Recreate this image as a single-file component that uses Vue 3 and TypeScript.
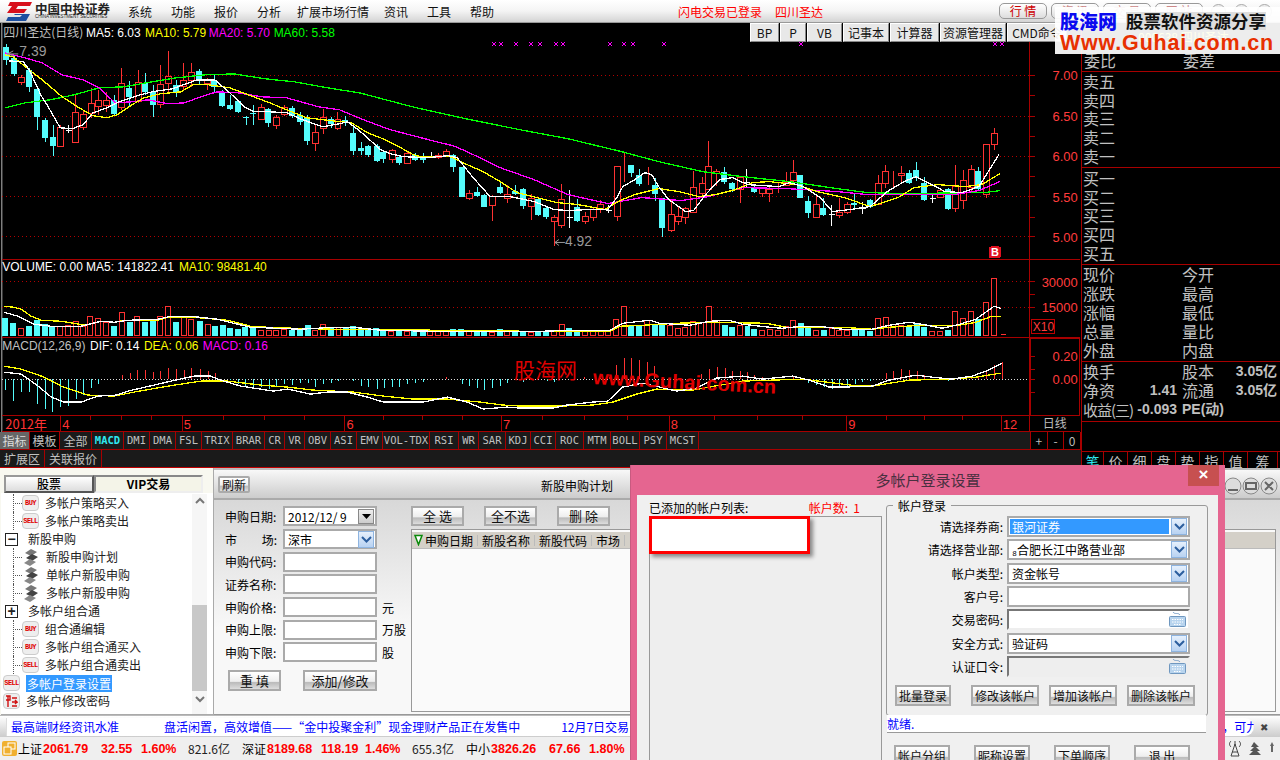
<script setup lang="ts">
type Candle = { x: number; k: string; t: number; b: number; h: number; l: number };
type Bar = { x: number; k: string; t: number };

const candleSrc = `5 c 47 60 44 65|13 c 58 74 55 76|20 r 77 82 75 85|28 c 70 87 68 92|36 c 89 117 87 130|44 c 120 138 118 142|52 c 137 146 125 156|59 r 127 146 125 147|67 w 130 130 125 133|74 r 112 142 95 143|82 r 114 127 110 130|90 r 103 113 88 118|97 r 100 106 90 115|105 r 100 105 92 112|113 c 100 114 95 115|120 r 83 107 68 110|128 c 88 97 81 107|137 r 82 101 70 103|144 c 83 92 73 95|152 c 92 105 85 117|159 r 84 104 65 108|167 r 76 83 51 92|175 c 85 93 80 97|182 r 80 86 63 90|190 r 72 80 63 87|198 c 71 79 69 84|206 r 80 83 78 90|213 c 80 87 75 93|221 c 93 106 90 107|229 c 105 109 95 110|237 c 101 112 100 113|245 c 117 118 116 125|252 c 113 114 105 125|260 r 107 119 104 120|267 c 109 123 108 127|275 r 117 125 115 129|283 r 107 114 105 116|291 c 108 116 106 118|299 c 115 122 112 125|306 c 117 141 115 145|314 r 132 143 125 151|322 r 117 128 109 134|330 c 119 124 117 128|337 r 119 128 112 130|345 c 120 123 116 126|353 c 133 151 125 155|361 c 148 151 142 155|368 c 146 155 145 157|377 c 146 161 144 162|383 c 152 159 150 163|392 r 150 159 149 163|399 c 157 163 155 165|407 r 153 163 152 164|415 c 155 160 153 161|423 c 156 160 153 163|431 w 156 156 152 158|438 r 155 157 153 159|446 r 151 156 149 157|453 c 155 167 154 172|462 c 167 197 167 197|469 r 193 198 190 200|477 c 192 196 187 197|484 c 195 207 194 207|492 r 196 205 195 221|500 c 187 193 183 194|507 r 194 198 185 203|515 c 191 194 185 195|523 c 189 206 188 209|531 r 198 206 194 220|538 c 199 215 198 216|546 c 208 217 207 219|554 r 217 221 215 247|561 r 199 225 184 228|569 w 217 217 190 228|577 c 207 221 199 222|585 r 216 221 212 224|593 r 209 217 208 221|600 r 204 209 200 213|608 w 210 210 205 213|617 r 166 216 166 221|624 r 160 160 153 182|631 c 165 173 165 177|639 c 175 184 169 186|648 r 180 180 167 185|655 c 185 194 178 201|662 c 198 229 198 238|671 r 214 231 199 233|678 r 216 221 207 225|685 r 208 217 207 224|693 r 187 212 171 213|702 r 183 193 177 198|708 r 166 189 141 190|716 r 171 173 169 186|724 c 172 182 167 184|732 c 183 189 182 192|740 r 177 189 176 203|747 w 182 182 169 187|755 c 188 192 186 193|763 r 188 193 187 197|770 r 189 193 187 202|779 r 187 187 183 193|787 r 182 185 172 186|794 r 172 180 160 183|801 c 175 198 175 198|809 c 201 213 196 218|817 r 204 217 196 218|824 c 208 215 198 216|832 w 214 214 205 226|840 r 212 215 198 218|848 r 204 212 202 214|855 c 203 205 193 208|863 w 208 208 202 214|871 c 200 207 199 208|879 r 183 204 175 205|886 r 171 183 165 188|894 r 179 179 171 188|902 r 173 175 166 182|910 c 173 183 170 184|917 c 170 177 162 181|925 c 183 200 177 201|933 w 198 198 195 203|941 r 190 197 188 198|949 c 189 209 188 210|956 r 186 208 165 212|964 r 180 200 170 209|972 r 169 187 165 192|979 c 171 189 167 190|987 r 144 194 144 198|995 r 133 144 128 150`;
const candles: Candle[] = candleSrc.split('|').map((s) => {
  const p = s.split(' ');
  return { x: +p[0], k: p[1], t: +p[2], b: +p[3], h: +p[4], l: +p[5] };
});

const ma5 = '8,61 22,62 28,70 40,96 47,107 59,128 71,129 82,125 92,113 106,108 118,102 139,95 151,92 171,89 188,83 196,80 214,80 229,93 245,108 253,112 269,112 286,113 302,120 322,127 339,124 347,122 359,131 367,138 380,150 390,154 403,157 427,158 448,156 457,158 473,178 490,197 510,197 534,202 554,210 568,211 588,210 608,210 617,198 623,187 635,180 645,173 652,175 659,187 669,200 686,212 694,211 706,195 720,180 733,178 748,185 763,186 780,187 790,183 804,187 821,198 833,212 851,210 871,207 888,192 905,182 917,177 929,183 946,192 963,193 980,187 1000,155';
const ma10 = '4,55 12,57 28,70 41,80 61,97 78,108 92,116 106,118 116,115 131,105 143,98 159,94 180,92 192,85 208,85 229,88 253,97 269,103 286,110 306,118 331,121 351,123 367,133 380,138 393,144 413,155 420,157 450,157 467,165 483,172 500,182 517,193 537,198 557,203 578,205 605,210 618,202 635,195 659,189 679,192 699,197 716,195 736,190 753,183 770,182 797,185 818,192 845,198 871,207 899,198 915,188 939,185 966,187 983,185 1001,174';
const ma20 = '4,53 24,58 41,63 61,75 82,80 98,88 114,103 131,102 147,100 167,104 184,103 200,97 216,92 237,93 261,97 286,98 318,107 339,110 363,120 390,130 413,136 440,143 453,146 467,152 500,168 534,180 568,195 608,204 642,198 682,201 709,197 743,188 787,189 838,192 868,195 905,195 956,195 980,191 1001,182';
const ma60 = '4,108 24,103 49,100 73,95 98,88 122,87 151,82 175,78 204,75 233,74 265,79 294,82 327,88 359,93 412,107 461,118 520,130 568,139 622,152 659,162 703,172 743,177 790,182 838,189 868,193 905,194 986,193 1001,191';

const grid = [75, 116, 156, 196, 237];
const volGrid = [282, 308];
const marks = [494, 501, 516, 531, 540, 556, 563, 610, 624, 633, 664, 802, 996, 1003];
const ticks = [59, 89, 120, 150, 181, 222, 263, 303, 344, 383, 422, 462, 501, 542, 584, 627, 669, 714, 758, 803, 847, 887, 925, 963, 1002];

function bars(src: string, off: number): Bar[] {
  return src.split(' ').map((s) => {
    const m = s.match(/(\d+)([cr])(\d+)/) as RegExpMatchArray;
    return { x: Math.round((+m[1] + off) / 3), k: m[2], t: +m[3] };
  });
}
const vol = [
  ...bars('13c177 37c192 61r208 85c201 107c183 131c195 154c200 178r200 201r197 224r187 247r202 268r172 292r176 316r190 340c202 362r160 386c188 409r172 433c188 456c185 478r172 502r140 526c190 548r172 571r180 596c186 620r196 642c202 665c197 688c207 710c210 733c205 757c208 780r212 803r212 826r212 850r210 873c212 896c212 920c198 943r212 967r196 990c205 1013r204 1037c205 1060c202 1083c208 1105c210 1127c208 1150c216 1174r215 1197c210 1220r215 1243c215 1268c216 1291r215 1314r216 1337r215 1360c210 1384c210 1408r216 1430c212 1453c217 1477r218 1500c211 1522r216', 0),
  ...bars('16c216 40c218 62r218 85c218 109c218 133r212 155r196 178c208 202c214 226r217 248r217 272r212 295r216 319r181 341r142 364c197 388c200 412r183 434c196 457c195 481r198 503r208 526r203 550r187 574r190 596r142 620r183 644c198 667c204 690r198 713c200 736c210 760r213 783r211 806r213 830r200 853r184 875c192 898c207 922r214 945c213 968r207 990r214 1015r214 1037c206 1060c212 1084c215 1108r178 1130r175 1153r196 1177r198 1200c204 1224c192 1246c204 1270r216 1294r216 1316c212 1339r157 1362r177 1385r157 1408c180 1432r130 1456r58', 1530),
].map((b) => ({ x: b.x, k: b.k, y: 260 + Math.round(b.t / 3) }));

const macd = [
  ...bars('13c392 37c425 61c400 85c400 107c435 131c450 154c460 178c445 201c442 224c420 247c408 269c388 292c375 362r347 386r342 409r332 433r333 456r338 478r337 502r327 526r330 548r332 571r327 596r330 620r336 642r342 688c363 710c375 733c382 757c388 780c385 803c390 826c382 850c375 873c378 896c372 920c372 943c385 967c375 990c372 1013c365 1060c365 1083c380 1105c385 1130c390 1152c388 1175c385 1198c383 1222c375 1244c372 1268c368 1337r354 1385c375 1408c380 1430c388 1453c392 1477c388 1500c380 1522c372', 0),
  ...bars('40c368 110c365 133c370 222r355 270r358 296r355 319r318 341r298 364r297 388r302 412r308 433r320 572r345 596r330 620r324 644r328 667r335 690r335 713r338 736r348 760r353 853r350 898c372 922c378 945c385 968c390 990c388 1015c380 1037c375 1060c370 1084c367 1130r342 1153r335 1177r330 1200r333 1224r336 1246r348 1316c367 1385r350 1408r352 1432r335 1456r318 1478r310', 1530),
].map((b) => ({ x: b.x, k: b.k, y: 260 + Math.round(b.t / 3) }));

function zline(a: string, b: string): string {
  const conv = (s: string, off: number) =>
    s.split(' ').map((p) => {
      const [x, y] = p.split(',').map(Number);
      return `${Math.round((x + off) / 3)},${260 + Math.round(y / 3)}`;
    });
  return [...conv(a, 0), ...conv(b, 1530)].join(' ');
}
const volY = zline('10,140 40,143 60,150 90,170 120,183 180,185 220,192 250,197 300,187 340,190 370,184 470,182 500,175 580,175 680,182 750,200 800,205 880,208 1000,210 1200,210 1300,214 1520,214', '30,215 150,217 300,215 330,200 400,198 500,193 600,190 770,193 830,205 1000,205 1090,210 1140,205 1240,198 1350,198 1400,190 1450,172 1475,172');
const volW = zline('10,160 50,170 100,195 150,200 240,200 300,185 340,190 380,182 470,180 510,172 570,170 650,180 700,193 750,205 900,210 1000,203 1060,205 1140,212 1300,216 1520,216', '30,216 100,217 180,212 300,212 340,192 420,182 450,192 540,198 600,185 660,182 700,195 780,205 820,208 880,200 930,200 1000,210 1090,210 1140,198 1200,190 1240,195 1300,208 1340,198 1400,180 1456,140 1475,148');
const macdY = zline('10,320 60,330 130,355 180,380 260,408 340,410 400,400 500,380 600,365 680,365 780,378 860,385 940,393 1060,398 1150,410 1240,420 1340,420 1440,430 1510,438', '30,441 70,442 150,442 250,438 310,428 380,405 440,390 550,392 700,365 880,360 950,368 1050,380 1090,380 1200,362 1330,360 1400,355 1475,342');
const macdW = zline('10,338 60,345 110,380 150,415 190,430 240,428 290,410 345,408 380,395 460,378 510,365 580,352 630,352 660,362 720,380 820,395 860,390 930,405 980,400 1040,400 1100,415 1150,428 1270,428 1340,415 1400,430 1450,450 1520,445', '30,446 130,448 170,438 250,430 295,425 340,385 400,373 450,385 500,395 560,388 620,358 700,352 760,360 850,352 900,362 960,385 1000,385 1090,382 1140,362 1220,347 1270,355 1330,360 1390,350 1430,335 1478,312');

const menu = [
  { t: '系统' }, { t: '功能' }, { t: '报价' }, { t: '分析' },
  { t: '扩展市场行情', wide: true }, { t: '资讯' }, { t: '工具' }, { t: '帮助' },
];
const floatBtns = [
  { t: 'BP', w: 29 }, { t: 'P', w: 26 }, { t: 'VB', w: 35 }, { t: '记事本', w: 46 },
  { t: '计算器', w: 49 }, { t: '资源管理器', w: 66 }, { t: 'CMD命令', w: 60 },
];
const cnTabs = [
  { t: '指标', w: 30, cls: 'sel' }, { t: '模板', w: 30, cls: 'blk' }, { t: '全部', w: 32, cls: '' },
];
const idxTabs = [
  { t: 'MACD', w: 32, cls: 'cy' }, { t: 'DMI', w: 26 }, { t: 'DMA', w: 26 }, { t: 'FSL', w: 26 },
  { t: 'TRIX', w: 31 }, { t: 'BRAR', w: 32 }, { t: 'CR', w: 20 }, { t: 'VR', w: 20 }, { t: 'OBV', w: 26 },
  { t: 'ASI', w: 26 }, { t: 'EMV', w: 26 }, { t: 'VOL-TDX', w: 47 }, { t: 'RSI', w: 29 }, { t: 'WR', w: 20 },
  { t: 'SAR', w: 27 }, { t: 'KDJ', w: 25 }, { t: 'CCI', w: 25 }, { t: 'ROC', w: 28 }, { t: 'MTM', w: 27 },
  { t: 'BOLL', w: 29 }, { t: 'PSY', w: 27 }, { t: 'MCST', w: 32 },
];
const sells = ['卖五', '卖四', '卖三', '卖二', '卖一'];
const buys = ['买一', '买二', '买三', '买四', '买五'];
const quote = [['现价', '今开'], ['涨跌', '最高'], ['涨幅', '最低'], ['总量', '量比'], ['外盘', '内盘']];
const sideTabs = [
  { t: '笔', w: 22 }, { t: '价', w: 24 }, { t: '细', w: 24 }, { t: '盘', w: 24 },
  { t: '势', w: 24 }, { t: '指', w: 24 }, { t: '值', w: 24 }, { t: '筹', w: 30 },
];
const tree = [
  { t: '多帐户策略买入', child: true, ic: 'buy' },
  { t: '多帐户策略卖出', child: true, ic: 'sell' },
  { t: '新股申购', exp: '−' },
  { t: '新股申购计划', child: true, ic: 'stack' },
  { t: '单帐户新股申购', child: true, ic: 'stack' },
  { t: '多帐户新股申购', child: true, ic: 'stack' },
  { t: '多帐户组合通', exp: '+' },
  { t: '组合通编辑', child: true, ic: 'buy' },
  { t: '多帐户组合通买入', child: true, ic: 'buy' },
  { t: '多帐户组合通卖出', child: true, ic: 'sell' },
  { t: '多帐户登录设置', top: true, ic: 'sell', sel: true },
  { t: '多帐户修改密码', top: true, ic: 'pw' },
];
const formRows = [
  { l: '申购代码', u: '' }, { l: '证券名称', u: '' }, { l: '申购价格', u: '元' },
  { l: '申购上限', u: '万股' }, { l: '申购下限', u: '股' },
];
const cols = ['申购日期', '新股名称', '新股代码', '市场'];
const acctRows = [
  { l: '请选择券商', v: '银河证券', k: 'sel', hi: true },
  { l: '请选择营业部', v: '₈合肥长江中路营业部', k: 'sel' },
  { l: '帐户类型', v: '资金帐号', k: 'sel' },
  { l: '客户号', v: '', k: 'in' },
  { l: '交易密码', v: '', k: 'kb' },
  { l: '安全方式', v: '验证码', k: 'sel' },
  { l: '认证口令', v: '', k: 'kbd' },
];
</script>

<template>
  <div class="page">
    <header class="top">
      <div class="brand">
        <svg class="mark" width="28" height="19" viewBox="0 0 28 19">
          <polygon points="5,0 27,0 25,4 13,4 11,7 22,7 19,11 2,11 7,4 3,4" fill="#d8101c" />
          <polygon points="10,12 25,12 21,19 1,19 3,15 15,15 17,13 9,13" fill="#1c4fa0" />
        </svg>
        <div class="brandtxt">
          <b>中国中投证券</b>
          <i>CHINA INVESTMENT SECURITIES</i>
        </div>
      </div>
      <nav class="menu">
        <span v-for="m in menu" :key="m.t" :class="{ wide: m.wide }">{{ m.t }}</span>
      </nav>
      <div class="login"><span>闪电交易已登录</span><span>四川圣达</span></div>
      <div class="topbtns">
        <span class="tbtn">行 情</span><span class="tbtn faded">资 讯</span>
        <span class="tbtn faded">交 易</span><span class="tbtn faded">网 站</span>
        <span class="circ"></span><span class="circ"></span><span class="circ"></span>
      </div>
    </header>

    <section class="market">
      <div class="chartcol">
        <svg class="chart" width="1081" height="410" viewBox="0 23 1081 410">
          <rect x="0" y="23" width="1081" height="410" fill="#000" />
          <line x1="0.5" y1="23" x2="0.5" y2="433" stroke="#bbb" />
          <g shape-rendering="crispEdges">
            <line v-for="g in grid" :key="'g' + g" x1="1" :y1="g + 0.5" x2="1030" :y2="g + 0.5" class="dot" />
            <line v-for="g in volGrid" :key="'v' + g" x1="1" :y1="g + 0.5" x2="1030" :y2="g + 0.5" class="dot" />
            <line x1="1" y1="380.5" x2="1030" y2="380.5" class="zero" />
            <g v-for="c in candles" :key="'c' + c.x">
              <template v-if="c.k === 'w'">
                <line :x1="c.x + 0.5" :y1="c.h" :x2="c.x + 0.5" :y2="c.l" stroke="#fff" />
                <line :x1="c.x - 2" :y1="c.t + 0.5" :x2="c.x + 4" :y2="c.t + 0.5" stroke="#fff" />
              </template>
              <template v-else-if="c.k === 'r'">
                <line :x1="c.x + 0.5" :y1="c.h" :x2="c.x + 0.5" :y2="c.t" class="up" />
                <line :x1="c.x + 0.5" :y1="c.b" :x2="c.x + 0.5" :y2="c.l" class="up" />
                <rect :x="c.x - 2.5" :y="c.t + 0.5" width="6" :height="Math.max(c.b - c.t, 0)" class="upbody" />
              </template>
              <template v-else>
                <line :x1="c.x + 0.5" :y1="c.h" :x2="c.x + 0.5" :y2="c.l" class="dn" />
                <rect :x="c.x - 3" :y="c.t" width="6" :height="Math.max(c.b - c.t, 1)" class="dnbody" />
              </template>
            </g>
            <polyline :points="ma60" class="ln green" />
            <polyline :points="ma20" class="ln mag" />
            <polyline :points="ma10" class="ln yel" />
            <polyline :points="ma5" class="ln wht" />
            <g v-for="(b, i) in vol" :key="'b' + i">
              <rect v-if="b.k === 'r'" :x="b.x - 2.5" :y="b.y + 0.5" width="5" :height="336 - b.y" class="upbody" />
              <rect v-else :x="b.x - 3" :y="b.y" width="6" :height="337 - b.y" class="dnbody" />
            </g>
            <rect x="1002" y="335" width="5" height="1" fill="#ff3232" />
            <polyline :points="volY" class="ln yel" />
            <polyline :points="volW" class="ln wht" />
            <line v-for="(b, i) in macd" :key="'m' + i" :x1="b.x + 0.5" y1="380" :x2="b.x + 0.5" :y2="b.y" :class="b.k === 'r' ? 'up' : 'dn'" />
            <polyline :points="macdY" class="ln yel" />
            <polyline :points="macdW" class="ln wht" />
            <g v-for="m in marks" :key="'x' + m" class="cross">
              <line :x1="m - 2" y1="42" :x2="m + 2" y2="46" />
              <line :x1="m + 2" y1="42" :x2="m - 2" y2="46" />
            </g>
            <g class="rule">
              <line x1="1" y1="260.5" x2="1081" y2="260.5" />
              <line x1="1" y1="338.5" x2="1081" y2="338.5" />
              <line x1="1" y1="416.5" x2="1081" y2="416.5" />
              <line x1="1030.5" y1="23" x2="1030.5" y2="433" />
              <line x1="1031" y1="339.5" x2="1081" y2="339.5" />
              <line x1="1080.5" y1="339" x2="1080.5" y2="417" />
              <line x1="1031.5" y1="339" x2="1031.5" y2="417" />
              <line x1="1" y1="432.5" x2="1081" y2="432.5" />
              <line v-for="t in ticks" :key="'t' + t" :x1="t + 0.5" y1="417" :x2="t + 0.5" y2="421" />
              <line x1="59.5" y1="417" x2="59.5" y2="432" />
              <line x1="181.5" y1="417" x2="181.5" y2="432" />
              <line x1="344.5" y1="417" x2="344.5" y2="432" />
              <line x1="501.5" y1="417" x2="501.5" y2="432" />
              <line x1="669.5" y1="417" x2="669.5" y2="432" />
              <line x1="847.5" y1="417" x2="847.5" y2="432" />
              <line x1="1002.5" y1="417" x2="1002.5" y2="432" />
              <line v-for="y in [75, 95, 116, 136, 156, 176, 196, 217, 237, 282, 295, 308, 357, 370, 380, 393]" :key="'a' + y" x1="1031" :y1="y + 0.5" x2="1036" :y2="y + 0.5" />
              <rect x="1032.5" y="320.5" width="23" height="14" fill="none" />
            </g>
            <rect x="990" y="247" width="12" height="12" rx="2" fill="#e01020" />
          </g>
          <text x="996" y="257" class="bb">B</text>
          <g class="lbl">
            <text x="2" y="37"><tspan class="gry cn">四川圣达(日线)</tspan></text>
            <text x="85" y="37" class="wt">MA5: 6.03</text>
            <text x="144" y="37" class="yl">MA10: 5.79</text>
            <text x="208" y="37" class="mg">MA20: 5.70</text>
            <text x="273" y="37" class="gn">MA60: 5.58</text>
            <text x="1" y="272" class="wt">VOLUME: 0.00</text>
            <text x="85" y="272" class="wt">MA5: 141822.41</text>
            <text x="178" y="272" class="yl">MA10: 98481.40</text>
            <text x="1" y="351" class="gry">MACD(12,26,9)</text>
            <text x="89" y="351" class="wt">DIF: 0.14</text>
            <text x="143" y="351" class="yl">DEA: 0.06</text>
            <text x="202" y="351" class="mg">MACD: 0.16</text>
            <text x="18" y="56" class="gry big">7.39</text>
            <text x="565" y="247" class="gry big">4.92</text>
          </g>
          <g class="ax">
            <text x="1079" y="80">7.00</text>
            <text x="1079" y="121">6.50</text>
            <text x="1079" y="161">6.00</text>
            <text x="1079" y="202">5.50</text>
            <text x="1079" y="243">5.00</text>
            <text x="1079" y="288">30000</text>
            <text x="1079" y="313">15000</text>
            <text x="1079" y="362">0.20</text>
            <text x="1079" y="385">0.00</text>
          </g>
          <text x="1034" y="332" class="axs">X10</text>
          <polyline points="12,51 6,54 12,56" class="arrow" />
          <line x1="6" y1="54" x2="17" y2="54" class="arrow" />
          <line x1="555" y1="243" x2="565" y2="243" class="arrow" />
          <polyline points="559,240 555,243 559,246" class="arrow" />
          <g class="date">
            <text x="4" y="430" class="cn">2012年</text>
            <text x="61" y="430">4</text><text x="183" y="430">5</text><text x="346" y="430">6</text>
            <text x="503" y="430">7</text><text x="671" y="430">8</text><text x="849" y="430">9</text>
            <text x="1004" y="430">12</text>
          </g>
          <text x="1044" y="429" class="dayl">日线</text>
          <text x="514" y="379" class="wm1">股海网</text>
          <text x="593" y="385" class="wm2" transform="rotate(3 593 385)">www.Guhai.com.cn</text>
        </svg>
        <div class="tabs">
          <div class="tabgroup">
            <span v-for="t in cnTabs" :key="t.t" class="tab cnT" :class="t.cls" :style="{ width: t.w + 'px' }">{{ t.t }}</span>
            <span v-for="t in idxTabs" :key="t.t" class="tab idx" :class="t.cls" :style="{ width: t.w + 'px' }">{{ t.t }}</span>
          </div>
          <div class="pm"><span>+</span><span>-</span><span>0</span></div>
        </div>
        <div class="ext"><span class="exta">扩展区</span><span class="extb">关联报价</span></div>
      </div>

      <aside class="side">
        <div class="sec head">
          <div class="code">000638 四川圣达</div>
          <div class="r2"><span>委比</span><span>委差</span></div>
        </div>
        <div class="sec five five-s"><div v-for="s in sells" :key="s">{{ s }}</div></div>
        <div class="sec five five-b"><div v-for="s in buys" :key="s">{{ s }}</div></div>
        <div class="sec qt">
          <div v-for="q in quote" :key="q[0]" class="r2"><span>{{ q[0] }}</span><span>{{ q[1] }}</span></div>
        </div>
        <div class="sec fin">
          <div class="fr"><span>换手</span><b></b><span class="c3">股本</span><b>3.05亿</b></div>
          <div class="fr"><span>净资</span><b>1.41</b><span class="c3">流通</span><b>3.05亿</b></div>
          <div class="fr"><span class="nb">收益(三)</span><b>-0.093</b><span class="c3 pe">PE(动)</span><b></b></div>
        </div>
        <div class="spacer"></div>
        <div class="sidetabs">
          <span v-for="(t, i) in sideTabs" :key="t.t" :class="{ on: i === 0 }" :style="{ width: t.w + 'px' }">{{ t.t }}</span>
        </div>
      </aside>
    </section>

    <section class="work">
      <div class="nav">
        <div class="navtabs"><span class="nt">股票</span><span class="nt act">VIP交易</span></div>
        <div class="treebox">
          <ul class="tree">
            <li v-for="n in tree" :key="n.t" :class="{ child: n.child, toplevel: n.top, hasexp: n.exp }">
              <span v-if="n.exp" class="exp">{{ n.exp }}</span>
              <span v-if="n.ic === 'buy'" class="ic buy">BUY</span>
              <span v-else-if="n.ic === 'sell'" class="ic sell">SELL</span>
              <svg v-else-if="n.ic === 'stack'" class="stack" width="16" height="17" viewBox="0 0 16 17">
                <polygon points="8,0 14,3 8,7 2,4" fill="#777" />
                <polygon points="9,5 15,8 9,12 3,9" fill="#444" />
                <polygon points="7,10 13,13 7,17 1,14" fill="#888" />
              </svg>
              <span v-else-if="n.ic === 'pw'" class="ic pw">
                <svg width="13" height="13" viewBox="0 0 13 13"><path d="M1 1h4v4H1M3 1v11M7 3h5M7 7h5l-2-2M12 7l-2 2M7 11h5" fill="none" stroke="#d01010" stroke-width="1.4" /></svg>
              </span>
              <span class="tt" :class="{ selt: n.sel }">{{ n.t }}</span>
            </li>
          </ul>
          <div class="sb">
            <svg width="12" height="7" viewBox="0 0 12 7"><path d="M2 6l4-4 4 4" fill="none" stroke="#777" stroke-width="2" /></svg>
            <span class="thumb"></span>
            <svg width="12" height="7" viewBox="0 0 12 7"><path d="M2 1l4 4 4-4" fill="none" stroke="#777" stroke-width="2" /></svg>
          </div>
        </div>
      </div>
      <div class="panel">
        <div class="phead">
          <span class="btn refresh">刷新</span>
          <span class="ptitle">新股申购计划</span>
          <div class="winbtns">
            <svg width="54" height="20" viewBox="0 0 54 20">
              <g fill="#ddd" stroke="#888"><circle cx="9" cy="10" r="8" /><circle cx="27" cy="10" r="8" /><circle cx="45" cy="10" r="8" /></g>
              <path d="M4 14h10M22 7h10v6H22zM41 6l8 8M49 6l-8 8" fill="none" stroke="#666" stroke-width="2" />
            </svg>
          </div>
        </div>
        <div class="pbody">
          <form class="buy-form" @submit.prevent>
            <div class="frow"><label>申购日期:</label>
              <div class="inp datei"><span>2012/12/ 9</span><i class="dd">
                <svg width="9" height="5" viewBox="0 0 9 5"><path d="M0 0h9L4.5 5z" /></svg></i></div></div>
            <div class="frow"><label class="just"><span>市</span><span>场:</span></label>
              <div class="inp datei"><span>深市</span><i class="sarrow"><svg width="11" height="7" viewBox="0 0 11 7"><path d="M1 1l4.500 4.500L10 1" fill="none" stroke="#2c5e9e" stroke-width="2" /></svg></i></div></div>
            <div v-for="r in formRows" :key="r.l" class="frow"><label>{{ r.l }}:</label><div class="inp"></div><em>{{ r.u }}</em></div>
            <div class="fbtns"><span class="btn b1">重 填</span><span class="btn b2">添加/修改</span></div>
          </form>
          <div class="lst">
            <div class="lbtns"><span class="btn b3">全 选</span><span class="btn b3">全不选</span><span class="btn b3">删 除</span></div>
            <div class="ltable">
              <div class="lhead">
                <svg width="9" height="12" viewBox="0 0 9 12"><path d="M1 1.500h7L4.500 10.500z" fill="#fff" stroke="#0a8a0a" stroke-width="1.500" /></svg>
                <span v-for="c in cols" :key="c" class="lc">{{ c }}</span>
              </div>
            </div>
          </div>
        </div>
      </div>
    </section>

    <section class="ticker">
      <div class="pill">
        <span class="tk1">最高端财经资讯水准</span>
        <span class="tk2">盘活闲置，高效增值——“金中投聚金利”现金理财产品正在发售中</span>
        <span class="tk3">12月7日交易</span>
        <span class="tk4">，可九</span>
      </div>
      <span class="tkx">✖</span>
    </section>

    <footer class="status">
      <svg class="sico" width="15" height="15" viewBox="0 0 15 15">
        <rect width="15" height="15" rx="2" fill="#f0b030" />
        <rect x="6" y="2" width="7" height="6" fill="none" stroke="#fff" />
        <rect x="2" y="6" width="7" height="7" fill="#f0b030" stroke="#fff" />
      </svg>
      <span class="nm n1">上证</span><b class="v1">2061.79</b><b class="v2">32.55</b><b class="v3">1.60%</b><span class="amt">821.6亿</span>
      <span class="nm n2">深证</span><b class="v1">8189.68</b><b class="v2b">118.19</b><b class="v3b">1.46%</b><span class="amt">655.3亿</span>
      <span class="nm n2">中小</span><b class="v1">3826.26</b><b class="v2">67.66</b><b class="v3">1.80%</b>
      <svg class="rico" width="54" height="20" viewBox="0 0 54 20">
        <path d="M0 4v12" stroke="#c8a020" stroke-width="2" />
        <path d="M11 5l-4 12h8zM8 13h6M11 2v4M7 2c-2 2-2 4 0 6M15 2c2 2 2 4 0 6" fill="none" stroke="#444" />
        <path d="M30 3l5 5h-3l4 4h-3l4 4H25l4-4h-3l4-4h-3z" fill="#555" />
        <path d="M48 3l2 4h-1v6h-2V7h-1z" fill="#666" />
      </svg>
    </footer>

    <!-- floating toolbar over the chart -->
    <div class="floatbar">
      <span v-for="b in floatBtns" :key="b.t" class="fb" :style="{ width: b.w + 'px' }">{{ b.t }}</span>
    </div>

    <div class="adlogo">
      <div class="adtop"><b class="ad1">股海网</b><b class="ad2">股票软件资源分享</b></div>
      <b class="ad3">Www.Guhai.com.cn</b>
    </div>

    <div class="modal">
      <div class="mtitle">
        <span>多帐户登录设置</span>
        <span class="mclose">×</span>
      </div>
      <div class="mbody">
        <div class="mleft">
          <div class="mhead"><span>已添加的帐户列表:</span><span class="cnt">帐户数: &nbsp;1</span></div>
          <div class="alist"><div class="redbox"></div></div>
        </div>
        <div class="mright">
          <fieldset class="grp">
            <legend>帐户登录</legend>
            <div v-for="r in acctRows" :key="r.l" class="arow">
              <label>{{ r.l }}:</label>
              <div class="actl" :class="r.k">
                <span class="aval" :class="{ hi: r.hi }">{{ r.v }}</span>
                <i v-if="r.k === 'sel'" class="sarrow"><svg width="11" height="7" viewBox="0 0 11 7"><path d="M1 1l4.500 4.500L10 1" fill="none" stroke="#2c5e9e" stroke-width="2" /></svg></i>
                <svg v-if="r.k === 'kb' || r.k === 'kbd'" class="kicon" width="17" height="15" viewBox="0 0 17 15">
                  <path d="M4 0c2 3 5 0 7 3" fill="none" stroke="#7aa0c8" />
                  <rect x="0.500" y="4.500" width="16" height="10" rx="1" fill="#b8d4ee" stroke="#6f97bf" />
                  <path d="M3 7.500h11M3 10h11M5 12.500h7" stroke="#fff" stroke-dasharray="1.500 1" />
                </svg>
              </div>
            </div>
            <div class="abtns">
              <span class="btn m1">批量登录</span><span class="btn m2">修改该帐户</span><span class="btn m2">增加该帐户</span><span class="btn m2">删除该帐户</span>
            </div>
          </fieldset>
          <div class="ready">就绪.</div>
          <div class="mfoot">
            <span class="btn m1">帐户分组</span><span class="btn m1">昵称设置</span><span class="btn m1">下单顺序</span><span class="btn m1">退 出</span>
          </div>
        </div>
      </div>
    </div>
  </div>
</template>

<style>
html, body { margin: 0; padding: 0; overflow: hidden; background: #000; }
</style>

<style scoped>
.page {
  position: relative;
  width: 1280px;
  height: 760px;
  overflow: hidden;
  display: flex;
  flex-direction: column;
  font-family: "Noto Sans CJK SC", "Liberation Sans", sans-serif;
  font-size: 12px;
  color: #000;
  background: #f0f0f0;
}
/* top bar */
.top {
  height: 23px;
  box-sizing: border-box;
  display: flex;
  align-items: center;
  background: linear-gradient(#fff, #f4f4f4 50%, #d4d4d4);
  border-bottom: 1px solid #999;
  flex: none;
}
.brand { width: 128px; flex: none; display: flex; align-items: center; padding-left: 5px; box-sizing: border-box; }
.mark { flex: none; }
.brandtxt { display: flex; flex-direction: column; margin-left: 2px; line-height: 1; color: #222; }
.brandtxt b { font-size: 12.500px; line-height: 13px; }
.brandtxt i { font-style: normal; font-size: 4.500px; font-family: "Liberation Sans", sans-serif; white-space: nowrap; }
.menu { display: flex; gap: 19px; width: 550px; flex: none; color: #111; }
.menu .wide { margin: 0 -4px 0 -3px; }
.login { display: flex; gap: 13px; color: #f00; flex: none; }
.topbtns { margin-left: 176px; display: flex; gap: 4px; align-items: center; flex: none; }
.tbtn {
  width: 48px; height: 16px; box-sizing: border-box; border: 1px solid #999; border-radius: 5px;
  background: linear-gradient(#fff, #ddd); color: #c00; font-size: 12px; line-height: 14px; text-align: center;
}
.tbtn.faded { color: #c88; }
.circ { width: 15px; height: 15px; border: 1px solid #aaa; border-radius: 50%; background: #eee; box-sizing: border-box; margin-left: 4px; }

/* market */
.market { display: flex; height: 445px; flex: none; background: #000; }
.chartcol { width: 1081px; flex: none; display: flex; flex-direction: column; }
.chart { display: block; font-family: "Liberation Sans", sans-serif; }
.dot { stroke: #b40000; stroke-dasharray: 1 3; }
.zero { stroke: #ddd; stroke-dasharray: 1 2; }
.up { stroke: #ff3232; }
.dn { stroke: #54fcfc; }
.upbody { fill: #000; stroke: #ff3232; }
.dnbody { fill: #54fcfc; }
.ln { fill: none; stroke-width: 1.3; }
.green { stroke: #00ff00; }
.mag { stroke: #ff00ff; }
.yel { stroke: #ffff00; }
.wht { stroke: #fff; }
.cross line { stroke: #ff00ff; }
.rule line, .rule rect { stroke: #a80000; }
.rule rect { stroke: #c00000; }
.bb { fill: #fff; font-size: 11px; font-weight: bold; text-anchor: middle; }
.lbl text { font-size: 12px; }
.lbl .cn { font-family: "Noto Sans CJK SC", sans-serif; font-size: 12px; }
.gry { fill: #c0c0c0; }
.wt { fill: #fff; }
.yl { fill: #ff0; }
.mg { fill: #f0f; }
.gn { fill: #0f0; }
.big { font-size: 14px !important; fill: #999; }
.ax text { fill: #ff3c3c; font-size: 13px; text-anchor: end; }
.axs { fill: #ff3c3c; font-size: 12px; }
.arrow { fill: none; stroke: #999; }
.date text { fill: #ff3232; font-size: 13px; }
.date .cn { font-family: "Noto Sans CJK SC", sans-serif; }
.dayl { fill: #bbb; font-size: 12px; font-family: "Noto Sans CJK SC", sans-serif; }
.wm1 { fill: #e00000; font-size: 21px; font-family: "Noto Sans CJK SC", sans-serif; }
.wm2 { fill: #e00000; font-size: 20px; font-weight: bold; }

.tabs { height: 17px; display: flex; background: #1a1a1a; border-bottom: 1px solid #a80000; flex: none; }
.tabgroup { display: flex; width: 1030px; flex: none; }
.tab { box-sizing: border-box; border-right: 1px solid #a80000; height: 17px; line-height: 17px; text-align: center; color: #c0c0c0; flex: none; white-space: nowrap; }
.cnT { font-size: 12px; }
.tab.sel { background: #666; color: #ddd; }
.tab.blk { background: #000; }
.idx { font-family: "DejaVu Sans Mono", monospace; font-size: 10.500px; }
.idx.cy { color: #2fe8f0; font-weight: bold; }
.pm { display: flex; width: 51px; flex: none; background: #000; border-left: 1px solid #a80000; box-sizing: border-box; }
.pm span { flex: 1; text-align: center; border-right: 1px solid #a80000; color: #bbb; line-height: 17px; font-size: 12px; }
.ext { height: 17px; display: flex; background: #1a1a1a; border-bottom: 1px solid #c00000; flex: none; color: #c0c0c0; font-size: 12px; line-height: 17px; }
.exta { width: 44px; text-align: center; border-right: 1px solid #a80000; }
.extb { width: 56px; text-align: center; border-right: 1px solid #a80000; }

.side { flex: 1; border-left: 1px solid #a80000; color: #c0c0c0; font-size: 16px; display: flex; flex-direction: column; min-width: 0; }
.sec { box-sizing: border-box; border-bottom: 1px solid #a80000; padding-left: 1px; flex: none; }
.head { height: 49px; position: relative; }
.code { position: absolute; left: 56px; top: 5px; font-size: 12px; color: #ff0; white-space: nowrap; }
.r2 { display: grid; grid-template-columns: 99px 1fr; }
.head .r2 { position: absolute; left: 2px; right: 0; top: 28px; line-height: 19px; }
.five div { line-height: 18.700px; height: 18.700px; }
.five-s { height: 96px; padding-top: 0; }
.five-b { height: 97px; padding-top: 1px; }
.qt { height: 97px; padding-top: 0; }
.qt .r2 { line-height: 19px; height: 19px; }
.fin { height: 60px; padding-top: 0; }
.fr { display: grid; grid-template-columns: 50px 44px 50px 50px; height: 19px; line-height: 19px; }
.fr b { font: bold 14px/19px "Liberation Sans", "Noto Sans CJK SC", sans-serif; text-align: right; white-space: nowrap; }
.fr .c3 { padding-left: 5px; white-space: nowrap; }
.nb { white-space: nowrap; letter-spacing: -1px; font-size: 15px; }
.pe { font: bold 14px/19px "Liberation Sans", "Noto Sans CJK SC", sans-serif; }
.spacer { height: 29px; flex: none; }
.sidetabs { display: flex; height: 17px; flex: none; border-top: 1px solid #a80000; }
.sidetabs span { box-sizing: border-box; border-right: 1px solid #a80000; text-align: center; font-size: 14px; line-height: 18px; flex: none; }
.sidetabs .on { color: #2fe8f0; }

/* work area */
.work { display: flex; height: 247px; flex: none; background: #f4f4f4; }
.nav { width: 214px; flex: none; box-sizing: border-box; border-right: 1px solid #aaa; background: #f8f8f0; padding: 7px 0 0 1px; display: flex; flex-direction: column; }
.navtabs { display: flex; margin-left: 3px; height: 18px; flex: none; }
.nt { box-sizing: border-box; width: 90px; height: 18px; border: 2px solid #999; border-right-color: #555; border-bottom-color: #555; background: linear-gradient(#fff, #ddd); text-align: center; font-size: 12px; line-height: 14px; font-weight: 500; }
.nt.act { width: 109px; border-color: #888 #eee #eee #888; background: #f4f4e8; font-weight: bold; }
.treebox { display: flex; flex: 1; background: #fff; min-height: 0; padding-top: 1px; border-bottom: 1px solid #aaa; }
.tree { list-style: none; margin: 0; padding: 0; width: 191px; flex: none; }
.tree li { height: 18px; display: flex; align-items: center; position: relative; color: #222; white-space: nowrap; padding-left: 2px; }
.child { padding-left: 21px !important; }
.child::before { content: ""; position: absolute; left: 12px; top: 0; bottom: 0; border-left: 1px dotted #555; }
.child::after { content: ""; position: absolute; left: 12px; top: 9px; width: 9px; border-top: 1px dotted #555; }
.hasexp { padding-left: 4px !important; }
.exp { box-sizing: border-box; width: 13px; height: 13px; border: 1px solid #222; line-height: 10px; text-align: center; font-weight: bold; font-size: 14px; margin-right: 9px; background: #fff; font-family: "Liberation Sans", sans-serif; }
.ic { position: relative; z-index: 1; display: inline-block; box-sizing: border-box; width: 17px; height: 16px; border-radius: 4px; background: #eee; border: 1px solid #ccc; color: #e00000; font: bold 7px/14px "Liberation Mono", monospace; text-align: center; margin-right: 5px; flex: none; letter-spacing: -.6px; }
.pw { display: inline-flex; align-items: center; justify-content: center; }
.stack { position: relative; z-index: 1; margin: 0 6px 0 1px; flex: none; }
.tt { padding: 0 1px; height: 18px; line-height: 18px; }
.selt { background: #3399ff; color: #fff; height: 17px; line-height: 17px; margin-left: 1px; }
.sb { width: 15px; display: flex; flex-direction: column; align-items: center; background: #f6f6f6; }
.sb svg { margin-top: 3px; flex: none; }
.sb .thumb { width: 15px; height: 86px; background: #c8c8c8; margin-top: 101px; }
.sb svg:last-child { margin-top: 5px; }
.panel { flex: 1; display: flex; flex-direction: column; min-width: 0; border-bottom: 1px solid #999; }
.phead { height: 32px; flex: none; box-sizing: border-box; display: flex; align-items: center; background: linear-gradient(#f8f8f8, #ccc); border-top: 2px solid #bbb; border-bottom: 2px solid #aaa; position: relative; }
.btn { display: inline-block; box-sizing: border-box; border: 2px solid #aaa; background: linear-gradient(#fff, #eee 55%, #bbb 62%, #ddd); text-align: center; color: #111; white-space: nowrap; }
.refresh { margin-left: 4px; width: 32px; height: 17px; line-height: 13px; border-radius: 2px; }
.ptitle { margin-left: 291px; margin-top: 3px; }
.winbtns { position: absolute; left: 1010px; top: 6px; }
.pbody { flex: 1; display: flex; background: linear-gradient(#d8d8d8, #f8f8f8 60%); min-height: 0; }
.buy-form { width: 197px; flex: none; padding: 5px 0 0 11px; box-sizing: border-box; }
.frow { display: flex; align-items: center; height: 22.700px; white-space: nowrap; }
.frow label { width: 58px; flex: none; }
.just { display: flex; justify-content: space-between; padding-right: 6px; box-sizing: border-box; }
.inp { box-sizing: border-box; width: 94px; height: 20px; background: #fff; border: 2px solid #aaa; flex: none; display: flex; align-items: center; padding-left: 3px; position: relative; }
.datei span { flex: 1; }
.dd { width: 16px; height: 15px; background: linear-gradient(#eee, #ccc); border: 1px solid #888; box-sizing: border-box; display: flex; align-items: center; justify-content: center; margin-right: 1px; }
.sarrow { width: 16px; height: 17px; box-sizing: border-box; border: 1px solid #8eb4e0; background: linear-gradient(#e6f0fc, #b8d2f2); display: flex; align-items: center; justify-content: center; flex: none; margin-right: 1px; }
.frow em { font-style: normal; margin-left: 5px; }
.fbtns { display: flex; gap: 22px; padding: 6px 0 0 3px; }
.b1 { width: 53px; height: 21px; line-height: 17px; font-size: 13px; }
.b2 { width: 74px; height: 21px; line-height: 17px; font-size: 13px; }
.lst { flex: 1; display: flex; flex-direction: column; padding: 6px 4px 2px 0; min-width: 0; }
.lbtns { display: flex; gap: 20px; flex: none; }
.b3 { width: 53px; height: 20px; line-height: 16px; font-size: 13px; }
.ltable { flex: 1; margin-top: 3px; background: #fafafa; border: 1px solid #999; padding-top: 2px; box-sizing: border-box; }
.lhead { display: flex; align-items: center; height: 16px; background: #d4d0c8; padding-left: 2px; border-bottom: 1px solid #bbb; white-space: nowrap; }
.lc { padding: 0 4px; border-right: 1px solid #bbb; line-height: 11px; font-size: 12px; }
.lc:first-of-type { padding-left: 2px; }

/* ticker */
.ticker { height: 22px; flex: none; display: flex; align-items: center; background: linear-gradient(#fff, #ccc); padding-left: 6px; box-sizing: border-box; border-top: 1px solid #bbb; }
.pill { width: 1248px; height: 18px; background: #fff; border-radius: 0 10px 10px 0; border-left: 1px solid #ddd; box-sizing: border-box; color: #00f; display: flex; align-items: center; white-space: nowrap; padding-left: 4px; overflow: hidden; }
.tk2 { margin-left: 45px; }
.tk3 { margin-left: 41px; }
.tk4 { margin-left: 593px; }
.tkx { margin-left: 6px; font-size: 10px; color: #444; }

/* status */
.status { height: 23px; flex: none; display: flex; align-items: center; background: #efefef; white-space: nowrap; position: relative; }
.sico { margin-left: 2px; flex: none; }
.nm { font-size: 12px; }
.n1 { margin-left: 1px; }
.n2 { margin-left: 15px; }
.status b { color: #f00; font: bold 12.500px "Liberation Sans", sans-serif; }
.v1 { margin-left: 1px; width: 45px; }
.v2 { margin-left: 13px; width: 31px; }
.v3 { margin-left: 9px; width: 35px; }
.v2b { margin-left: 9px; width: 38px; }
.v3b { margin-left: 6px; width: 35px; }
.amt { margin-left: 12px; font-size: 12px; width: 39px; color: #222; }
.rico { position: absolute; left: 1224px; top: 2px; }

/* over-content */
.floatbar { position: absolute; left: 750px; top: 23px; display: flex; gap: 1px; }
.fb { box-sizing: border-box; height: 19px; background: #e8e8e8; border: 1px solid; border-color: #fff #888 #888 #fff; font-size: 12px; line-height: 17px; text-align: center; color: #111; white-space: nowrap; overflow: hidden; }
.adlogo { position: absolute; left: 1055px; top: 7px; width: 225px; height: 47px; background: rgba(255, 255, 255, .93); padding: 2px 0 0 5px; box-sizing: border-box; overflow: hidden; }
.adtop { display: flex; align-items: center; height: 24px; }
.ad1 { font-size: 19px; color: #0a0af0; line-height: 24px; width: 66px; font-weight: 900; }
.ad2 { font-size: 17.500px; color: #111; line-height: 18px; background: #ddd; white-space: nowrap; }
.ad3 { display: block; font: bold 21.500px/21px "Liberation Sans", sans-serif; color: #e83000; white-space: nowrap; letter-spacing: .8px; }

.modal { position: absolute; left: 630px; top: 465px; width: 595px; height: 295px; background: #e56590; border-left: 1px solid #c85a80; box-sizing: border-box; display: flex; flex-direction: column; }
.mtitle { height: 30px; flex: none; position: relative; text-align: center; font-size: 15px; line-height: 30px; color: #4a3040; }
.mclose { position: absolute; right: 6px; top: 0; width: 31px; height: 21px; background: #c75050; color: #fff; font: bold 17px/20px "Liberation Sans", sans-serif; }
.mbody { flex: 1; margin: 0 7px 0 6px; background: #f0f0f0; display: flex; padding-left: 12px; min-height: 0; overflow: hidden; }
.mleft { width: 233px; flex: none; display: flex; flex-direction: column; }
.mhead { display: flex; justify-content: space-between; height: 21px; line-height: 26px; padding-right: 22px; box-sizing: border-box; white-space: nowrap; }
.cnt { color: #f00; }
.alist { flex: 1; background: #eee; border: 1px solid #999; border-bottom: 0; position: relative; }
.redbox { box-sizing: border-box; width: 161px; height: 38px; background: #fff; border: 3px solid #f00; box-shadow: 3px 3px 4px #888; margin: -1px 0 0 -1px; }
.mright { width: 322px; margin-left: 4px; flex: none; display: flex; flex-direction: column; }
.grp { margin: 4px 0 0 0; padding: 3px 0 0 0; height: 217px; box-sizing: border-box; border: 1px solid #999; border-radius: 3px; min-width: 0; flex: none; }
.grp legend { margin-left: 6px; padding: 0 5px; font-size: 12px; line-height: 13px; }
.arow { display: flex; align-items: center; height: 23.300px; white-space: nowrap; }
.arow label { width: 116px; text-align: right; flex: none; margin-right: 4px; }
.actl { width: 183px; height: 21px; box-sizing: border-box; border: 2px solid #aaa; background: #fff; display: flex; align-items: center; flex: none; padding-left: 1px; }
.aval { flex: 1; height: 15px; line-height: 15px; padding-left: 2px; }
.hi { background: #3399ff; color: #fff; margin-right: 2px; }
.actl.kb, .actl.kbd { border-color: #777 #eee #eee #777; }
.actl.kbd { background: #eee; }
.kicon { margin-right: 2px; flex: none; }
.abtns { display: flex; padding: 7px 0 0 8px; }
.m1 { width: 56px; height: 21px; line-height: 17px; flex: none; }
.m2 { width: 68px; height: 21px; line-height: 17px; margin-left: 10px; flex: none; }
.m2:nth-child(2) { margin-left: 20px; }
.ready { height: 17px; background: #fff; border-bottom: 1px solid #999; color: #00f; margin: -1px 2px 0 1px; line-height: 17px; flex: none; }
.mfoot { display: flex; padding: 12px 0 0 8px; gap: 24px; flex: none; }
</style>
